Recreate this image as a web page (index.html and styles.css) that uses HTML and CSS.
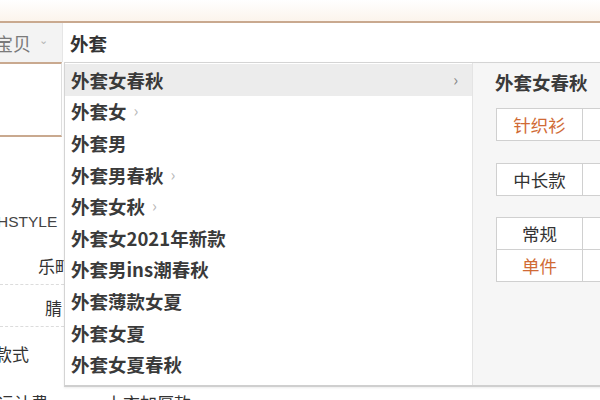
FILE: index.html
```html
<!DOCTYPE html>
<html lang="zh-CN">
<head>
<meta charset="utf-8">
<title>搜索建议</title>
<link rel="stylesheet" href="styles.css">
</head>
<body>
<div class="page">
  <div class="top"></div>
  <div class="search">
    <div class="cat"><span class="cat-text">宝贝</span><span class="cat-arrow">⌄</span></div>
    <div class="input">外套</div>
  </div>
  <div class="under">
    <div class="sidebox"></div>
    <div class="rows">
      <div class="row r1"><span class="hs">HSTYLE</span></div>
      <div class="row r2 dashed"><span>乐町</span></div>
      <div class="row r3 dashed"><span>腈</span></div>
      <div class="row r4"><span>款式</span></div>
      <div class="row r5"><span>运计费</span><span class="r5b">上衣加厚款</span></div>
    </div>
  </div>

  <div class="dropdown">
    <ul class="list">
      <li class="item active"><span>外套女春秋</span><span class="arr end">›</span></li>
      <li class="item"><span>外套女</span><span class="arr">›</span></li>
      <li class="item"><span>外套男</span></li>
      <li class="item"><span>外套男春秋</span><span class="arr">›</span></li>
      <li class="item"><span>外套女秋</span><span class="arr">›</span></li>
      <li class="item"><span>外套女2021年新款</span></li>
      <li class="item"><span>外套男ins潮春秋</span></li>
      <li class="item"><span>外套薄款女夏</span></li>
      <li class="item"><span>外套女夏</span></li>
      <li class="item"><span>外套女夏春秋</span></li>
    </ul>
    <div class="panel">
      <div class="ptitle">外套女春秋</div>
      <table class="tags t1"><tr><td class="hot">针织衫</td><td></td></tr></table>
      <table class="tags t2"><tr><td>中长款</td><td></td></tr></table>
      <table class="tags t3"><tr><td>常规</td><td></td></tr><tr><td class="hot">单件</td><td></td></tr></table>
    </div>
  </div>
</div>
</body>
</html>
```

FILE: styles.css
```css
html, body {
  margin: 0;
  padding: 0;
  background: #ffffff;
}
body {
  font-family: "Noto Sans CJK SC", "Noto Sans", sans-serif;
  color: #333;
  overflow: hidden;
}
.page {
  position: relative;
  width: 600px;
  height: 400px;
  overflow: hidden;
}
.top {
  height: 21px;
  background: linear-gradient(#ffffff, #fcf4ec);
  border-bottom: 2px solid #c9a98f;
}
.search {
  display: flex;
  height: 39px;
  background: #fff;
}
.cat {
  width: 62px;
  flex-shrink: 0;
  background: #f3f3f3;
  display: flex;
  align-items: center;
  border-right: 1px solid #e6e6e6;
  overflow: hidden;
}
.cat-text {
  margin-left: -5px;
  font-size: 18px;
  color: #7a7a7a;
  white-space: nowrap;
}
.cat-arrow {
  margin-left: 8px;
  font-size: 11px;
  color: #b5b5b5;
  line-height: 1;
  margin-top: -6px;
}
.input {
  padding-left: 7px;
  display: flex;
  align-items: center;
  font-size: 18.5px;
  font-weight: bold;
  color: #333;
}
.under {
  display: flex;
  flex-direction: column;
}
.sidebox {
  width: 61px;
  height: 71px;
  border-top: 2px solid #c9a98f;
  border-bottom: 2px solid #c9a98f;
  border-right: 1px solid #dedede;
}
.rows {
  margin-top: 64px;
  width: 260px;
}
.row {
  width: 64px;
  overflow: hidden;
  height: 42px;
  display: flex;
  align-items: flex-end;
  padding-bottom: 6px;
  box-sizing: border-box;
  font-size: 17px;
  white-space: nowrap;
  color: #333;
}
.dashed {
  border-bottom: 1px dashed #dcdcdc;
}
.r1 {
  align-items: center;
  padding-bottom: 0;
}
.r1 .hs {
  margin-left: -3px;
  font-family: "Liberation Sans", "Noto Sans CJK SC", sans-serif;
  font-size: 15.5px;
  color: #444;
}
.r2 span { margin-left: 38px; }
.r3 span { margin-left: 45px; }
.r4 {
  height: 43px;
  padding-bottom: 4px;
}
.r4 span { margin-left: -5px; }
.r5 {
  width: 260px;
  height: 40px;
  align-items: flex-start;
  padding-top: 20px;
  padding-bottom: 0;
}
.r5 span { margin-left: -3px; }
.r5 .r5b { margin-left: 58px; }

/* dropdown overlay */
.dropdown {
  position: absolute;
  left: 64px;
  top: 62px;
  width: 560px;
  height: 322px;
  background: #fff;
  border: 1px solid #d4d4d4;
  border-bottom: 2px solid #cfcfcf;
  box-shadow: 0 1px 2px rgba(0, 0, 0, 0.08);
  display: flex;
}
.list {
  list-style: none;
  margin: 0;
  padding: 1px 0 0;
  width: 407px;
  flex-shrink: 0;
}
.item {
  height: 31.6px;
  display: flex;
  align-items: center;
  padding-left: 6px;
  font-size: 18.5px;
  font-weight: bold;
  color: #3a3a3a;
  white-space: nowrap;
}
.item.active {
  background: #ececec;
}
.arr {
  margin-left: 7px;
  font-size: 16px;
  font-weight: normal;
  color: #b8b8b8;
  margin-top: -2px;
}
.arr.end {
  margin-left: auto;
  margin-right: 14px;
  color: #888;
}
.panel {
  flex-shrink: 0;
  width: 153px;
  background: #f6f6f6;
  border-left: 1px solid #e4e4e4;
  padding: 2px 0 0 22px;
}
.ptitle {
  height: 34px;
  display: flex;
  align-items: center;
  font-size: 18.5px;
  font-weight: bold;
  color: #3a3a3a;
  white-space: nowrap;
}
.tags {
  border-collapse: collapse;
  background: #fff;
  margin-left: 1px;
}
.tags td {
  border: 1px solid #d0d0d0;
  height: 31px;
  padding: 0;
  text-align: center;
  font-size: 17.5px;
  color: #333;
  white-space: nowrap;
}
.tags td:first-child { width: 85px; }
.tags td:last-child { width: 60px; }
.tags td.hot { color: #d06a35; }
.t1 { margin-top: 9px; }
.t2 { margin-top: 22px; }
.t3 { margin-top: 21px; }
```
